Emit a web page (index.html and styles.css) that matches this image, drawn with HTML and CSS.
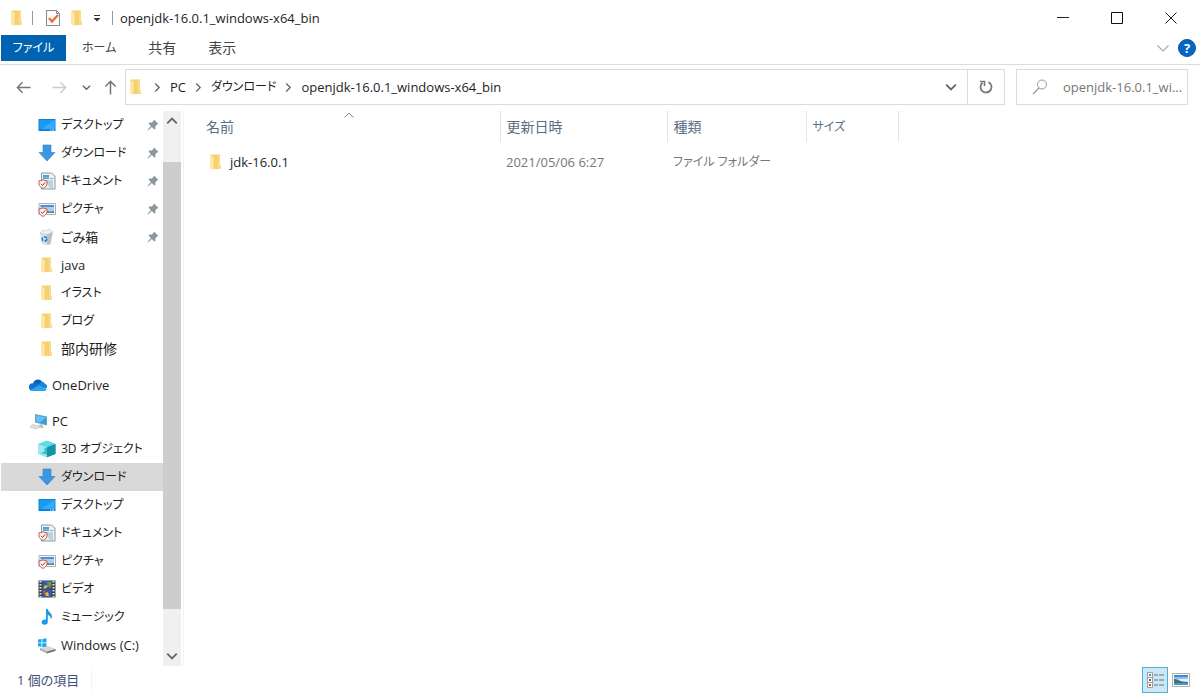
FILE: index.html
```html
<!DOCTYPE html>
<html lang="ja">

<head>
    <meta charset="UTF-8">
    <meta name="viewport" content="width=device-width, initial-scale=1.0">
    <title>openjdk-16.0.1_windows-x64_bin</title>
    <link rel="stylesheet" href="styles.css">
</head>

<body>
    <!-- shared icons -->
    <svg class="sprite" aria-hidden="true">
        <symbol id="folder" viewBox="0 0 18 18">
            <path d="M4 1.500h9v10.500l1 1v3H4z" fill="#f5d171" />
            <path d="M11 1.500h2v10.500l1 1v3h-3z" fill="#f9dc8b" />
            <path d="M3 1.500l3.500 2.500v13L3 15.500z" fill="#ffe8a6" />
        </symbol>
        <symbol id="desktop" viewBox="0 0 18 18">
            <path d="M.5 3h17v12H.5z" fill="#0a84d8" />
            <path d="M1.500 4h15v9h-15z" fill="#1a9af5" />
            <path d="M16.500 4v9h-13z" fill="#35adfa" />
            <path d="M12 14h1M14 14h2" stroke="#d6effd" />
        </symbol>
        <symbol id="download" viewBox="0 0 18 18">
            <path d="M5 1h8v7.500h4L9 17 1 8.500h4z" fill="#3b97e3" />
            <path d="M5 1h8v7.500h4L9 17 1 8.500h4z" fill="none" stroke="#2b80cc" stroke-width=".6" />
        </symbol>
        <symbol id="shield" viewBox="0 0 10 10">
            <path d="M5 .7c1.300 1 2.700 1.100 4 1.100v3c0 2.200-2 3.700-4 4.600C3 8.500 1 7 1 4.800v-3C2.300 1.800 3.700 1.700 5 .7z" fill="#f5f5f5" stroke="#d8543f" stroke-width="1" />
            <path d="M3 4.800l1.500 1.700L7.300 3.300" fill="none" stroke="#555" stroke-width="1" />
        </symbol>
        <symbol id="document" viewBox="0 0 18 18">
            <path d="M3.500 1h10L17 4v13H3.500z" fill="#eef1f4" stroke="#929a9f" />
            <path d="M5 3h6v4H5z" fill="#4aa5dc" />
            <path d="M5 5.500h6M12 6.500h3.500M5 9h10M8 11h7M10 13h5M11 15h4" stroke="#8fb4cc" />
            <use href="#shield" x="0" y="7" width="10" height="10" />
        </symbol>
        <symbol id="picture" viewBox="0 0 18 18">
            <path d="M1 3.500h16.500v11H1z" fill="#f6f6f6" stroke="#b0b0b0" />
            <path d="M2.500 5H16v8H2.500z" fill="#a9cdf3" />
            <path d="M2.500 5H16v2H2.500z" fill="#568fd9" />
            <path d="M5 12c2-2 3-2 5-1s4 0 6 0v2H5z" fill="#5d8b96" />
            <use href="#shield" x="0" y="7" width="10" height="10" />
        </symbol>
        <symbol id="trash" viewBox="0 0 18 18">
            <path d="M2 5l12-1.500-2 13-6 .5-3-2z" fill="#dde2e6" />
            <path d="M9 6l6-2-2.500 12L9 17z" fill="#b9c1c8" />
            <path d="M2 5l3-3 3 1 3-2 4 3-6 2.500z" fill="#eef0f2" stroke="#bcc4ca" stroke-width=".6" />
            <circle cx="6.500" cy="11" r="2.200" fill="none" stroke="#1f7ad1" stroke-width="1.600" stroke-dasharray="3.200 1.200" />
        </symbol>
        <symbol id="pin" viewBox="0 0 12 12">
            <path d="M7 .5L11.500 5l-1.500.6-1.600 1.600.1 2.600-1.200.7-2.400-2.500L1 11.500l-.5-.5 3.400-3.900L1.600 4.700l.7-1.200 2.500.1L6.400 2z" fill="#8a979f" />
        </symbol>
        <symbol id="chevron" viewBox="0 0 10 10">
            <path d="M1 3l4 4 4-4" fill="none" stroke="currentColor" stroke-width="1.600" />
        </symbol>
        <symbol id="next" viewBox="0 0 8 8">
            <path d="M2 .5L5.500 4 2 7.500" fill="none" stroke="currentColor" stroke-width="1.200" />
        </symbol>
        <symbol id="arrow" viewBox="0 0 16 16">
            <path d="M15.500 8H1.500M7 2.500L1.500 8 7 13.500" fill="none" stroke="currentColor" stroke-width="1.600" />
        </symbol>
    </svg>

    <header class="titlebar">
        <svg class="icon"><use href="#folder" /></svg>
        <span class="bar"></span>
        <button class="quick" type="button" aria-label="プロパティ">
            <svg class="icon" viewBox="0 0 18 18">
                <path d="M2.500 1.500h10l3 3v12h-13z" fill="#fbfbfb" stroke="#8a8a8a" />
                <path d="M12.500 1.500v3h3" fill="none" stroke="#8a8a8a" />
                <path d="M5 9l3 3.500 6-6.500" fill="none" stroke="#ee6a35" stroke-width="2.200" />
            </svg>
        </button>
        <button class="quick folder" type="button" aria-label="新しいフォルダー">
            <svg class="icon"><use href="#folder" /></svg>
        </button>
        <button class="quick more" type="button" aria-label="クイック アクセス">
            <svg viewBox="0 0 8 8" width="8" height="8">
                <path d="M1 1.500h6" stroke="#333" />
                <path d="M.5 4h7L4 7.500z" fill="#333" />
            </svg>
        </button>
        <span class="bar"></span>
        <h1 class="title">openjdk-16.0.1_windows-x64_bin</h1>
        <div class="controls">
            <button type="button" aria-label="最小化">
                <svg viewBox="0 0 12 12"><path d="M0 5.500h12" stroke="#222" /></svg>
            </button>
            <button type="button" aria-label="最大化">
                <svg viewBox="0 0 12 12"><path d="M.5.5h11v11H.5z" fill="none" stroke="#111" /></svg>
            </button>
            <button type="button" aria-label="閉じる">
                <svg viewBox="0 0 12 12"><path d="M.5.5l11 11M11.500.5l-11 11" stroke="#222" /></svg>
            </button>
        </div>
    </header>

    <div class="ribbon">
        <button class="tab file kana" type="button">ファイル</button>
        <button class="tab kana" type="button">ホーム</button>
        <button class="tab kanji" type="button">共有</button>
        <button class="tab kanji" type="button">表示</button>
        <div class="ribbon-end">
            <button type="button" class="expand" aria-label="リボンの展開">
                <svg viewBox="0 0 12 12" width="12" height="12"><path d="M.5 3.500L6 9l5.500-5.500" fill="none" stroke="#aaa" stroke-width="1.200" /></svg>
            </button>
            <button type="button" class="help" aria-label="ヘルプ">?</button>
        </div>
    </div>

    <div class="toolbar">
        <button class="nav" type="button" aria-label="戻る"><svg class="arrow"><use href="#arrow" /></svg></button>
        <button class="nav off" type="button" aria-label="進む"><svg class="arrow right"><use href="#arrow" /></svg></button>
        <button class="nav recent" type="button" aria-label="最近表示した場所"><svg class="chev tiny"><use href="#chevron" /></svg></button>
        <button class="nav up" type="button" aria-label="上へ"><svg class="arrow top"><use href="#arrow" /></svg></button>
        <div class="address">
            <svg class="icon"><use href="#folder" /></svg>
            <svg class="sep"><use href="#next" /></svg>
            <a href="#">PC</a>
            <svg class="sep"><use href="#next" /></svg>
            <a href="#" class="kana">ダウンロード</a>
            <svg class="sep"><use href="#next" /></svg>
            <a href="#">openjdk-16.0.1_windows-x64_bin</a>
            <button class="drop" type="button" aria-label="以前の場所"><svg class="chev"><use href="#chevron" /></svg></button>
            <button class="refresh" type="button" aria-label="更新">
                <svg viewBox="0 0 14 14" width="14" height="14">
                    <path d="M9.500 2.100A5.500 5.500 0 1 1 3.500 2.800" fill="none" stroke="#777" stroke-width="1.800" />
                    <path d="M1 1.500h4.500V6" fill="none" stroke="#777" stroke-width="1.600" />
                </svg>
            </button>
        </div>
        <label class="search">
            <svg viewBox="0 0 16 16" width="16" height="16">
                <circle cx="10" cy="5.500" r="4.500" fill="none" stroke="#999" />
                <path d="M7 9L1 15" stroke="#999" stroke-width="1.200" />
            </svg>
            <input type="text" placeholder="openjdk-16.0.1_wi..." aria-label="検索">
        </label>
    </div>

    <div class="panes">
        <nav class="sidebar">
            <ul class="tree">
                <li><a href="#" class="kana"><svg class="icon"><use href="#desktop" /></svg>デスクトップ<svg class="pin"><use href="#pin" /></svg></a></li>
                <li><a href="#" class="kana"><svg class="icon"><use href="#download" /></svg>ダウンロード<svg class="pin"><use href="#pin" /></svg></a></li>
                <li><a href="#" class="kana"><svg class="icon"><use href="#document" /></svg>ドキュメント<svg class="pin"><use href="#pin" /></svg></a></li>
                <li><a href="#" class="kana"><svg class="icon"><use href="#picture" /></svg>ピクチャ<svg class="pin"><use href="#pin" /></svg></a></li>
                <li><a href="#"><svg class="icon"><use href="#trash" /></svg>ごみ箱<svg class="pin"><use href="#pin" /></svg></a></li>
                <li><a href="#"><svg class="icon"><use href="#folder" /></svg>java</a></li>
                <li><a href="#" class="kana"><svg class="icon"><use href="#folder" /></svg>イラスト</a></li>
                <li><a href="#" class="kana"><svg class="icon"><use href="#folder" /></svg>ブログ</a></li>
                <li><a href="#" class="kanji"><svg class="icon"><use href="#folder" /></svg>部内研修</a></li>
                <li class="root">
                    <a href="#">
                        <svg class="icon" viewBox="0 0 18 18">
                            <path d="M4 8a5 5 0 0 1 9-2.500L9 12H3z" fill="#0a5fb8" />
                            <path d="M3.500 15A3.800 3.800 0 0 1 4 7.200c2-.4 3 .3 9 4.800l-1 3z" fill="#1173cf" />
                            <path d="M11 7.500c1-2.500 4-2.200 4.500 0 2.500.5 3 3 2.300 4.500L13 12.500 8 9z" fill="#1b86dd" />
                            <path d="M3 15c-1.500 0-2-1-2-1l9-4.500 7.800 3.500c-.3 1.200-1.300 2-2.800 2z" fill="#29a7ec" />
                        </svg>OneDrive
                    </a>
                </li>
                <li class="root">
                    <a href="#">
                        <svg class="icon" viewBox="0 0 18 18">
                            <path d="M6 2l12 2.500v9L6 10.500z" fill="#7899ad" />
                            <path d="M7 3.300l10 2.100v6.700L7 9.600z" fill="#27a4ee" />
                            <path d="M7 3.300l10 2.100-6 5.200-4-1z" fill="#5fc3f8" />
                            <path d="M11 12l3 1v2l2 .6-4 .4-3-1z" fill="#b8c3ca" />
                            <path d="M4 12.500l7 2-4 2.500-6-2z" fill="#dce2e5" stroke="#b3bdc3" stroke-width=".6" />
                        </svg>PC
                    </a>
                </li>
                <li>
                    <a href="#" class="kana">
                        <svg class="icon" viewBox="0 0 18 18">
                            <path d="M9 .8l8.500 3.200v10L9 17.200.5 14V4z" fill="#2fbfd0" />
                            <path d="M9 .8L17.500 4 9 7.200.5 4z" fill="#5edbe6" />
                            <path d="M.5 4L9 7.200v10L.5 14z" fill="#a3eaf0" />
                            <path d="M9 7.200L17.500 4v10L9 17.200z" fill="#1692a9" />
                            <path d="M2.500 13l4-1.500V7.200L9 8.200v6.500z" fill="#38bdca" />
                        </svg>3D オブジェクト
                    </a>
                </li>
                <li><a href="#" class="kana active"><svg class="icon"><use href="#download" /></svg>ダウンロード</a></li>
                <li><a href="#" class="kana"><svg class="icon"><use href="#desktop" /></svg>デスクトップ</a></li>
                <li><a href="#" class="kana"><svg class="icon"><use href="#document" /></svg>ドキュメント</a></li>
                <li><a href="#" class="kana"><svg class="icon"><use href="#picture" /></svg>ピクチャ</a></li>
                <li>
                    <a href="#" class="kana">
                        <svg class="icon" viewBox="0 0 18 18">
                            <path d="M.5.5h17v17H.5z" fill="#3c4043" />
                            <path d="M2.500 1v17M15.500 1v17" stroke="#e4e4e4" stroke-width="2" stroke-dasharray="1.600 1.400" />
                            <path d="M4.500 1h9v7.500h-9z" fill="#315cb3" />
                            <path d="M4.500 9.500h9v7.500h-9z" fill="#315cb3" />
                            <path d="M9 2h4.500v4L10 7z" fill="#57a24a" />
                            <path d="M7 5l3 1-2 2.500H5zM7 13l3-1 1 4H8z" fill="#efb52d" />
                            <path d="M10 5l3 2-2 1.500zM5 10l3 2-3 2z" fill="#d7483a" />
                        </svg>ビデオ
                    </a>
                </li>
                <li>
                    <a href="#" class="kana">
                        <svg class="icon" viewBox="0 0 18 18">
                            <path d="M8 1h1.800c.3 3.300 4.700 4 4.200 8.500l-1.200 1.800c0-2.800-1.300-3.800-3-4.300V14A3.100 2.700 0 1 1 8 11.700z" fill="#189bee" />
                        </svg>ミュージック
                    </a>
                </li>
                <li>
                    <a href="#">
                        <svg class="icon" viewBox="0 0 18 18">
                            <path d="M0 3.500l3.500-.5v3.500H0zM4.300 2.900L8.500 2.300v4.200H4.300zM0 7.300h3.500v3.500L0 10.300zM4.300 7.300h4.200v4.200l-4.200-.6z" fill="#18a8ee" />
                            <path d="M2 12l8-2 7.500 3L9 15.500z" fill="#d5d7d9" />
                            <path d="M2 12l7 3.500v2L2 14z" fill="#a5a9ac" />
                            <path d="M9 15.500l8.500-2.500v2L9 17.500z" fill="#6f7477" />
                        </svg>Windows (C:)
                    </a>
                </li>
            </ul>
            <div class="scrollbar">
                <button type="button" aria-label="上へスクロール"><svg class="chev flip"><use href="#chevron" /></svg></button>
                <div class="track"><div class="thumb"></div></div>
                <button type="button" aria-label="下へスクロール"><svg class="chev"><use href="#chevron" /></svg></button>
            </div>
        </nav>

        <main class="content">
            <table class="files">
                <colgroup>
                    <col class="col-name">
                    <col class="col-date">
                    <col class="col-type">
                    <col class="col-size">
                </colgroup>
                <thead>
                    <tr>
                        <th scope="col" class="kanji">名前
                            <svg class="sort" viewBox="0 0 10 6"><path d="M.5 5.500L5 1l4.500 4.500" fill="none" stroke="#888" /></svg>
                        </th>
                        <th scope="col" class="kanji">更新日時</th>
                        <th scope="col" class="kanji">種類</th>
                        <th scope="col" class="kana">サイズ</th>
                    </tr>
                </thead>
                <tbody>
                    <tr>
                        <td><a href="#" class="file-name"><svg class="icon"><use href="#folder" /></svg>jdk-16.0.1</a></td>
                        <td>2021/05/06 6:27</td>
                        <td class="kana">ファイル フォルダー</td>
                        <td></td>
                    </tr>
                </tbody>
            </table>
        </main>
    </div>

    <footer class="status">
        <span class="count">1 個の項目</span>
        <div class="views">
            <button class="view on" type="button" aria-label="詳細">
                <svg viewBox="0 0 18 18" width="18" height="18">
                    <path d="M1.500 1.500h5v15h-5zM1.500 6.500h5M1.500 11.500h5" fill="#fff" stroke="#a29d9b" />
                    <path d="M3 4h2" stroke="#3c8ac2" stroke-width="2" />
                    <path d="M3 9h2" stroke="#666" stroke-width="2" />
                    <path d="M3 14h2" stroke="#d0442e" stroke-width="2" />
                    <path d="M8 4h4M13 4h5M8 9h4M13 9h5M8 14h4M13 14h5" stroke="#8b999f" stroke-width="1.300" />
                </svg>
            </button>
            <button class="view" type="button" aria-label="大アイコン">
                <svg viewBox="0 0 18 14" width="18" height="14">
                    <path d="M.5.5h17v13H.5z" fill="#fff" stroke="#b5afad" />
                    <path d="M2 2h14v10H2z" fill="#8fc1f0" />
                    <path d="M2 2h14v2H2z" fill="#3f8ade" />
                    <path d="M6 6h10v3H9z" fill="#e6f2fb" />
                    <path d="M2 6c4 0 5 3 14 3v2H2z" fill="#3c7570" />
                    <path d="M2 10h14v2H2z" fill="#4f92cf" />
                </svg>
            </button>
        </div>
    </footer>
</body>

</html>
```
FILE: styles.css
```css
* {
    box-sizing: border-box;
}

body {
    display: flex;
    flex-direction: column;
    min-height: 100vh;
    margin: 0;
    background: #fff;
    color: #1e1e1e;
    font: 13px/20px "Open Sans", "Noto Sans CJK JP", sans-serif;
    font-feature-settings: "palt";
}

button {
    display: flex;
    align-items: center;
    justify-content: center;
    padding: 0;
    border: none;
    background: none;
    color: inherit;
    font: inherit;
}

a {
    color: inherit;
    text-decoration: none;
}

.kana {
    font-size: 12px;
}

.kanji {
    font-size: 14px;
}

.sprite {
    position: absolute;
    width: 0;
    height: 0;
}

.icon {
    flex: none;
    width: 18px;
    height: 18px;
}

/* title bar */
.titlebar {
    display: flex;
    align-items: center;
    height: 35px;
    padding-left: 8px;
}

.bar {
    width: 1px;
    height: 14px;
    margin: 0 7px 0 6px;
    background: #999;
}

.quick {
    width: 26px;
    height: 24px;
}

.quick.folder {
    width: 22px;
}

.quick.more {
    width: 18px;
}

.title {
    margin: 0;
    font-size: 13px;
    font-weight: normal;
}

.controls {
    display: flex;
    margin-left: auto;
    padding-right: 2px;
}

.controls button {
    width: 54px;
    height: 35px;
}

.controls svg {
    width: 12px;
    height: 12px;
}

/* ribbon */
.ribbon {
    display: flex;
    padding: 0 0 3px 1px;
    border-bottom: 1px solid #dcdcdc;
}

.tab {
    height: 26px;
    padding: 0 16px;
    color: #444;
}

.tab.file {
    width: 65px;
    padding: 0;
    background: #0063b1;
    color: #fff;
}

.ribbon-end {
    display: flex;
    align-items: center;
    gap: 9px;
    margin-left: auto;
    padding-right: 4px;
}

.help {
    width: 18px;
    height: 18px;
    border: 1px solid #0a559e;
    border-radius: 50%;
    background: #0067c5;
    color: #fff;
    font-weight: bold;
}

/* toolbar */
.toolbar {
    display: flex;
    padding: 4px 12px 0 5px;
}

.nav {
    width: 36px;
    height: 36px;
    color: #777;
}

.nav.off {
    color: #ccc;
}

.nav.recent {
    width: 18px;
}

.nav.up {
    width: 30px;
}

.arrow {
    width: 15px;
    height: 15px;
}

.arrow.right {
    transform: rotate(180deg);
}

.arrow.top {
    transform: rotate(90deg);
}

.chev {
    width: 12px;
    height: 12px;
    color: #666;
}

.chev.tiny {
    width: 9px;
    height: 9px;
}

.chev.flip {
    transform: rotate(180deg);
}

.address {
    display: flex;
    flex: 1;
    align-items: center;
    height: 36px;
    padding-left: 1px;
    border: 1px solid #dcdcdc;
}

.sep {
    width: 9px;
    height: 9px;
    margin: 0 8px;
    color: #666;
}

.drop {
    width: 33px;
    height: 34px;
    margin-left: auto;
}

.refresh {
    width: 37px;
    height: 34px;
    border-left: 1px solid #dcdcdc;
}

.search {
    display: flex;
    align-items: center;
    gap: 15px;
    width: 172px;
    height: 36px;
    margin-left: 11px;
    padding-left: 15px;
    border: 1px solid #dcdcdc;
}

.search svg {
    flex: none;
}

.search input {
    flex: 1;
    min-width: 0;
    padding: 0;
    border: none;
    outline: none;
    background: none;
    font: inherit;
}

.search input::placeholder {
    color: #777;
}

/* panes */
.panes {
    display: flex;
    flex: 1;
    padding-top: 6px;
}

.sidebar {
    display: flex;
    width: 184px;
    padding-right: 2px;
    border-right: 1px solid #f3f3f3;
}

.tree {
    flex: 1;
    margin: 0;
    padding: 0 0 0 1px;
    list-style: none;
}

.tree a {
    display: flex;
    align-items: center;
    gap: 5px;
    height: 28px;
    padding: 0 4px 0 37px;
}

.tree .root {
    margin-top: 8px;
}

.tree .root a {
    padding-left: 28px;
}

.tree a.active {
    background: #d9d9d9;
}

.pin {
    width: 12px;
    height: 12px;
    margin-left: auto;
}

.scrollbar {
    display: flex;
    flex-direction: column;
    width: 18px;
    background: #f0f0f0;
}

.scrollbar button {
    height: 20px;
}

.track {
    flex: 1;
    padding: 31px 0 37px;
}

.thumb {
    height: 100%;
    background: #cdcdcd;
}

/* file list */
.content {
    flex: 1;
}

.files {
    table-layout: fixed;
    width: 714px;
    border-collapse: collapse;
}

.col-name {
    width: 316px;
}

.col-date {
    width: 167px;
}

.col-type {
    width: 139px;
}

.col-size {
    width: 92px;
}

.files th,
.files td {
    padding: 0 6px;
    text-align: left;
}

.files th {
    position: relative;
    height: 31px;
    border-right: 1px solid #e5e5e5;
    color: #5a6c86;
    font-weight: normal;
}

.files td {
    height: 40px;
    color: #777;
}

.files th:first-child {
    padding-left: 22px;
}

.files td:first-child {
    padding-left: 23px;
    color: #1e1e1e;
}

.sort {
    position: absolute;
    top: 1px;
    left: 160px;
    width: 10px;
    height: 6px;
}

.file-name {
    display: flex;
    align-items: center;
    gap: 5px;
}

/* status bar */
.status {
    display: flex;
    align-items: center;
    justify-content: space-between;
    height: 28px;
    padding: 0 6px 0 17px;
    color: #3d5277;
}

.count {
    padding-right: 12px;
    border-right: 1px solid #f3f3f3;
}

.views {
    display: flex;
}

.view {
    width: 26px;
    height: 26px;
}

.view.on {
    border: 1px solid #4fb0dd;
    background: #cce8f6;
}
```
